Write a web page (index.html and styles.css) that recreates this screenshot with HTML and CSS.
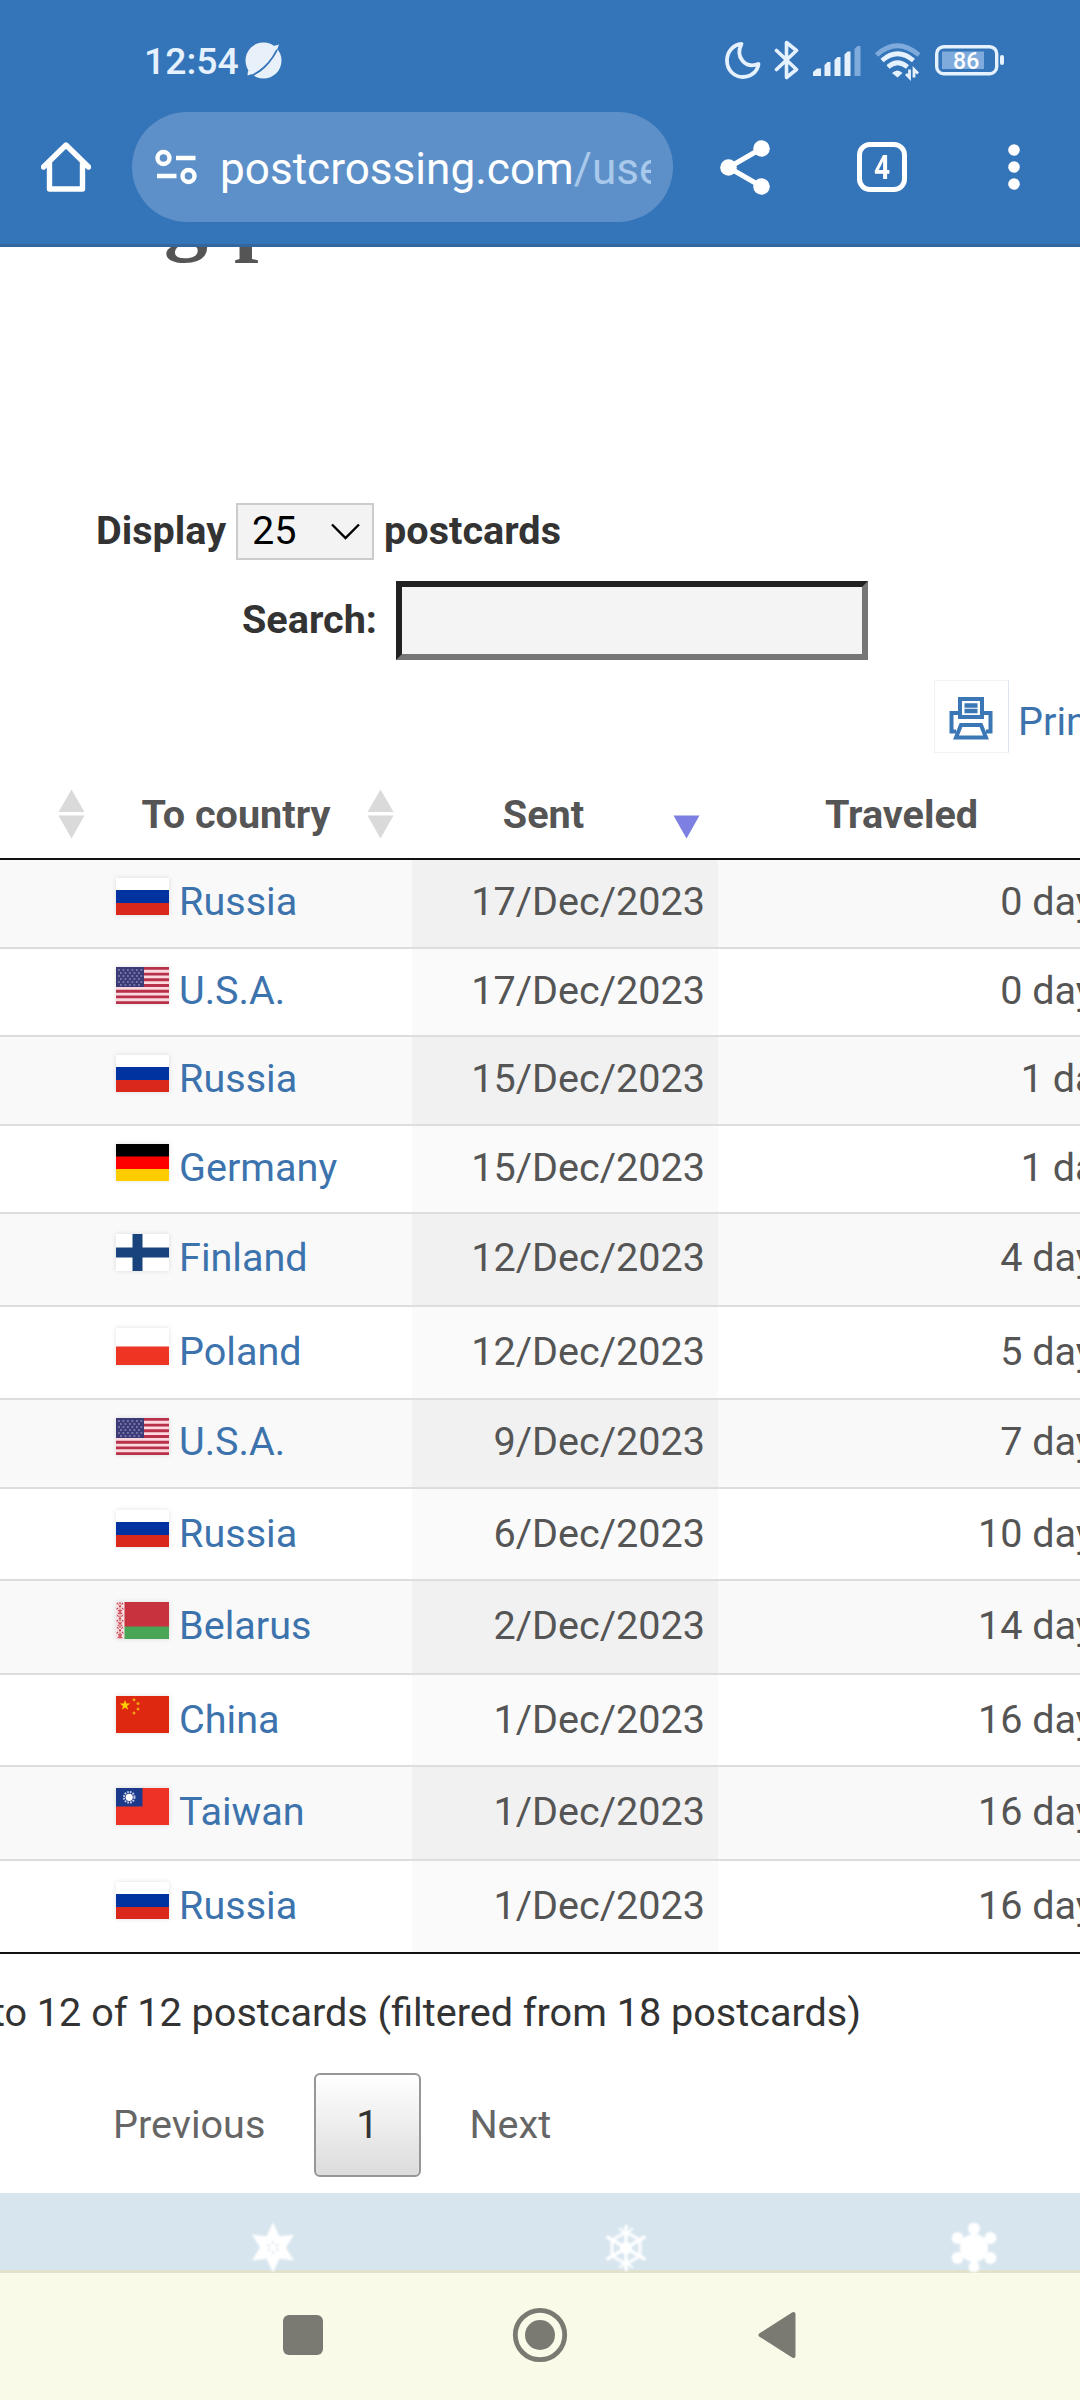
FILE: index.html
```html
<!doctype html>
<html lang="en">
  <head>
    <meta charset="UTF-8" />
    <meta name="viewport" content="width=device-width, initial-scale=1.0" />
    <title>Traveling postcards</title>
    <link rel="stylesheet" href="styles.css">
  </head>
  <body>
    <!-- flags and sort arrows, reused in the table -->
    <svg class="defs" width="0" height="0">
      <symbol id="flag-ru" viewBox="0 0 53 37" preserveAspectRatio="none">
        <rect width="53" height="37" fill="#fff" />
        <rect y="12" width="53" height="13" fill="#0033a0" />
        <rect y="25" width="53" height="12" fill="#da291c" />
      </symbol>
      <symbol id="flag-us" viewBox="0 0 53 37" preserveAspectRatio="none">
        <rect width="53" height="37" fill="#fbd9de" />
        <path d="M0 1.4h53M0 7.1h53M0 12.8h53M0 18.5h53M0 24.2h53M0 29.9h53M0 35.6h53" stroke="#b8304a" stroke-width="2.9" />
        <rect width="28" height="20" fill="#3c3b78" />
        <path d="M2 3h25M4 6h22M2 9h25M4 12h22M2 15h25M4 18h22" stroke="#8a8aba" stroke-width="1.5" stroke-dasharray="1.8 2.7" />
      </symbol>
      <symbol id="flag-de" viewBox="0 0 53 37" preserveAspectRatio="none">
        <rect width="53" height="37" fill="#000" />
        <rect y="12.5" width="53" height="13" fill="#f00" />
        <rect y="25" width="53" height="12" fill="#fc0" />
      </symbol>
      <symbol id="flag-fi" viewBox="0 0 53 37" preserveAspectRatio="none">
        <rect width="53" height="37" fill="#fff" />
        <path d="M0 18.5h53M21.5 0v37" stroke="#18437c" stroke-width="10" />
      </symbol>
      <symbol id="flag-pl" viewBox="0 0 53 37" preserveAspectRatio="none">
        <rect width="53" height="37" fill="#fff" />
        <rect y="18.5" width="53" height="18.5" fill="#ee3524" />
      </symbol>
      <symbol id="flag-by" viewBox="0 0 53 37" preserveAspectRatio="none">
        <rect width="53" height="37" fill="#c8313e" />
        <rect y="24.5" width="53" height="12.5" fill="#4aa657" />
        <rect width="8.5" height="37" fill="#f4dfe1" />
        <path d="M1 1l6 6-6 6 6 6-6 6 6 6-6 6M7 1L1 7l6 6-6 6 6 6-6 6 6 6M4 0v37" fill="none" stroke="#cb4350" stroke-width="1.1" stroke-dasharray="2.2 1.2" />
      </symbol>
      <symbol id="flag-cn" viewBox="0 0 53 37" preserveAspectRatio="none">
        <rect width="53" height="37" fill="#de2910" />
        <path d="M9 4l1.3 3.6h3.9L11 9.900l1.200 3.900L9 11.500l-3.200 2.300L7 9.900 3.800 7.600h3.900z" fill="#ffd000" />
        <g fill="#f0a010">
          <circle cx="18" cy="3.800" r="1.500" />
          <circle cx="22" cy="7.600" r="1.500" />
          <circle cx="22" cy="13" r="1.500" />
          <circle cx="18" cy="17" r="1.500" />
        </g>
      </symbol>
      <symbol id="flag-tw" viewBox="0 0 53 37" preserveAspectRatio="none">
        <rect width="53" height="37" fill="#ef3226" />
        <rect width="26.5" height="18.500" fill="#1b3a8c" />
        <circle cx="13.200" cy="9.300" r="5.300" fill="none" stroke="#c3cbe4" stroke-width="2" stroke-dasharray="1.700 1.080" />
        <circle cx="13.200" cy="9.300" r="3.600" fill="#fff" />
      </symbol>
      <symbol id="sort-both" viewBox="0 0 27 50">
        <path d="M13.500 0.500L26.500 23H0.500zM13.500 49.500L26.500 26.500H0.500z" fill="#dadada" />
      </symbol>
      <symbol id="sort-desc" viewBox="0 0 27 50">
        <path d="M13.500 49.500L26.500 26.500H0.500z" fill="#7d80e0" />
      </symbol>
    </svg>

    <header class="browser">
      <div class="status-bar">
        <span class="clock">12:54</span>
        <svg class="planet" width="37" height="37" viewBox="0 0 37 37">
          <circle cx="18.500" cy="18.500" r="18" fill="#e8f0fa" />
          <path d="M4 34.500Q12 32 19.500 25Q29 16 34 3" fill="none" stroke="#3474b9" stroke-width="1.800" />
          <path d="M3 28.500L2.500 33.500 9 31.500M27 4.500L34 2.500 32 8" fill="#e8f0fa" />
        </svg>
        <div class="status-icons">
          <svg width="36" height="44" viewBox="0 0 36 44">
            <path d="M16.500 6C8 6.500 2 14 2 22.500C2 32.500 9.500 39 18 39C26 39 32.500 33.500 33.500 26C20 31 10 19 16.500 6Z" fill="none" stroke="#e6f1fe" stroke-width="3.800" stroke-linejoin="round" />
          </svg>
          <svg width="26" height="44" viewBox="0 0 26 44">
            <path d="M2.500 12.500L22.500 31.500 12.500 39.500V4.500L22.500 12.500 2.500 31.500" fill="none" stroke="#e6f1fe" stroke-width="3.600" stroke-linejoin="round" stroke-linecap="round" />
          </svg>
          <svg width="48" height="44" viewBox="0 0 48 44">
            <path d="M0 38v-4l4-3.500h4V38zM11.500 38V27l3-3h3v14zM21.500 38V22l3-3h3v19zM31.500 38V16.500l3-3h3V38z" fill="#e6f1fe" />
            <path d="M41.500 38V11l3-3h3v30z" fill="#7fabdc" />
          </svg>
          <svg width="48" height="44" viewBox="0 0 48 44">
            <g fill="none" stroke-width="4.600">
              <path d="M2.500 17Q23 -1.500 45 17" stroke="#7fabdc" />
              <path d="M8 22.500Q23.500 9 39.500 22.500M14 29Q23.500 20.500 33.500 29" stroke="#e6f1fe" />
            </g>
            <path d="M18 35Q23.500 30 28.500 35L23.500 39.500z" fill="#e6f1fe" />
            <path d="M35.500 31.500v8L32 36M40 39.500v-8l4 4" fill="none" stroke="#e6f1fe" stroke-width="2.800" />
          </svg>
          <svg width="70" height="44" viewBox="0 0 70 44">
            <rect x="1.700" y="8.700" width="60" height="27" rx="7" fill="none" stroke="#e6f1fe" stroke-width="3.400" />
            <rect x="7" y="13.500" width="42" height="17.500" fill="#7fabdc" />
            <rect x="65" y="17" width="4" height="10" rx="2" fill="#e6f1fe" />
            <text x="31.200" y="30.600" class="battery-level">86</text>
          </svg>
        </div>
      </div>

      <div class="toolbar">
        <svg width="50" height="50" viewBox="0 0 50 50">
          <path d="M2.500 25L25 3l22.500 22M8.500 21v26h33V21" fill="none" stroke="#fff" stroke-width="5.400" stroke-linejoin="round" stroke-linecap="round" />
        </svg>
        <div class="address">
          <svg width="42" height="36" viewBox="0 0 42 36">
            <g fill="none" stroke="#fff" stroke-width="4.400">
              <circle cx="8.500" cy="9" r="6" />
              <circle cx="33.500" cy="27" r="6" />
              <path d="M21 9h19.500M2 27h19.500" />
            </g>
          </svg>
          <span class="url">postcrossing.com<span class="path">/user</span></span>
        </div>
        <svg class="share" width="50" height="55" viewBox="0 0 50 55">
          <path d="M41.500 8.500L8.500 27.500l33 19" fill="none" stroke="#fff" stroke-width="5" />
          <g fill="#fff">
            <circle cx="41.500" cy="8.500" r="8.300" />
            <circle cx="8.500" cy="27.500" r="8.300" />
            <circle cx="41.500" cy="46.500" r="8.300" />
          </g>
        </svg>
        <div class="tab-count"><span>4</span></div>
        <svg width="12" height="46" viewBox="0 0 12 46" fill="#fff">
          <circle cx="6" cy="6" r="5.800" />
          <circle cx="6" cy="23" r="5.800" />
          <circle cx="6" cy="40" r="5.800" />
        </svg>
      </div>
    </header>

    <main>
      <h1>Traveling postcards</h1>

      <div class="length-row">
        <span>Display</span>
        <div class="select">
          <span>25</span>
          <svg width="29" height="17" viewBox="0 0 29 17">
            <path d="M1 1.500L14.500 15 28 1.500" fill="none" stroke="#000" stroke-width="2.400" />
          </svg>
        </div>
        <span>postcards</span>
      </div>

      <div class="search-row">
        <label for="search">Search:</label>
        <input id="search" type="text" />
      </div>

      <div class="print-row">
        <span class="print-icon">
          <svg width="44" height="44" viewBox="0 0 44 44">
            <g fill="none" stroke="#3b76b5" stroke-width="4">
              <path d="M11 21V3h22v18z" />
              <path d="M11 17H2.500v18.500H7M33 17h8.500v18.500H37" />
              <path d="M12 29h20l5 12.500H7z" />
            </g>
            <path d="M15.500 9.500h13M15.500 15h13" stroke="#3b76b5" stroke-width="4.500" />
          </svg>
        </span>
        <a>Print</a>
      </div>

      <table>
        <colgroup>
          <col class="col-from">
          <col class="col-country">
          <col class="col-sent">
          <col class="col-traveled">
        </colgroup>
        <thead>
          <tr>
            <th><div class="head"><span></span><svg width="27" height="50"><use href="#sort-both" /></svg></div></th>
            <th><div class="head"><span>To country</span><svg width="27" height="50"><use href="#sort-both" /></svg></div></th>
            <th><div class="head"><span>Sent</span><svg width="27" height="50"><use href="#sort-desc" /></svg></div></th>
            <th><div class="head"><span>Traveled</span><svg width="27" height="50"></svg></div></th>
          </tr>
        </thead>
        <tbody>
          <tr class="short first">
            <td></td>
            <td><svg class="flag"><use href="#flag-ru" /></svg><a>Russia</a></td>
            <td class="num sorted">17/Dec/2023</td>
            <td class="num">0 days</td>
          </tr>
          <tr class="short">
            <td></td>
            <td><svg class="flag"><use href="#flag-us" /></svg><a>U.S.A.</a></td>
            <td class="num sorted">17/Dec/2023</td>
            <td class="num">0 days</td>
          </tr>
          <tr class="short first">
            <td></td>
            <td><svg class="flag"><use href="#flag-ru" /></svg><a>Russia</a></td>
            <td class="num sorted">15/Dec/2023</td>
            <td class="num">1 day</td>
          </tr>
          <tr class="short">
            <td></td>
            <td><svg class="flag"><use href="#flag-de" /></svg><a>Germany</a></td>
            <td class="num sorted">15/Dec/2023</td>
            <td class="num">1 day</td>
          </tr>
          <tr class="medium">
            <td></td>
            <td><svg class="flag"><use href="#flag-fi" /></svg><a>Finland</a></td>
            <td class="num sorted">12/Dec/2023</td>
            <td class="num">4 days</td>
          </tr>
          <tr>
            <td></td>
            <td><svg class="flag"><use href="#flag-pl" /></svg><a>Poland</a></td>
            <td class="num sorted">12/Dec/2023</td>
            <td class="num">5 days</td>
          </tr>
          <tr class="short first">
            <td></td>
            <td><svg class="flag"><use href="#flag-us" /></svg><a>U.S.A.</a></td>
            <td class="num sorted">9/Dec/2023</td>
            <td class="num">7 days</td>
          </tr>
          <tr class="tight">
            <td></td>
            <td><svg class="flag"><use href="#flag-ru" /></svg><a>Russia</a></td>
            <td class="num sorted">6/Dec/2023</td>
            <td class="num">10 days</td>
          </tr>
          <tr class="loose">
            <td></td>
            <td><svg class="flag"><use href="#flag-by" /></svg><a>Belarus</a></td>
            <td class="num sorted">2/Dec/2023</td>
            <td class="num">14 days</td>
          </tr>
          <tr class="tight">
            <td></td>
            <td><svg class="flag"><use href="#flag-cn" /></svg><a>China</a></td>
            <td class="num sorted">1/Dec/2023</td>
            <td class="num">16 days</td>
          </tr>
          <tr class="loose">
            <td></td>
            <td><svg class="flag"><use href="#flag-tw" /></svg><a>Taiwan</a></td>
            <td class="num sorted">1/Dec/2023</td>
            <td class="num">16 days</td>
          </tr>
          <tr class="last">
            <td></td>
            <td><svg class="flag"><use href="#flag-ru" /></svg><a>Russia</a></td>
            <td class="num sorted">1/Dec/2023</td>
            <td class="num">16 days</td>
          </tr>
        </tbody>
      </table>

      <div class="info"><span>Showing 1 to 12 of 12 postcards (filtered from 18 postcards)</span></div>

      <div class="pagination">
        <span>Previous</span>
        <span class="current">1</span>
        <span>Next</span>
      </div>
    </main>

    <footer class="snow">
      <svg width="46" height="50" viewBox="0 0 46 50">
        <path d="M23 2l6 13 13.500-1.500-7.500 12 7.500 12-13.500-1.500L23 49l-6-13L3.500 37.500l7.500-12-7.500-12L17 15z" fill="#fff" stroke="#fff" stroke-width="1.500" />
        <path d="M23 19v3M23 29v3M17.500 22.500l2.500 1.500M26 27l2.500 1.500M28.500 22.500L26 24M20 27l-2.500 1.500" stroke="#d7e5ee" stroke-width="1.500" />
      </svg>
      <svg width="46" height="50" viewBox="0 0 46 50">
        <g fill="none" stroke="#fff">
          <path d="M23 3v46M3.500 14.500l39 23M3.500 37.500l39-23" stroke-width="3.400" />
          <path d="M23 10l14 8v16L23 42 9 34V18z" stroke-width="3" />
          <path d="M16 6l7 6 7-6M16 46l7-6 7 6" stroke-width="2.200" />
        </g>
        <circle cx="23" cy="26" r="6" fill="#fff" />
      </svg>
      <svg width="46" height="50" viewBox="0 0 46 50" fill="#fff">
        <circle cx="23" cy="26" r="14" />
        <path d="M23 3v46M3.500 14.500l39 23M3.500 37.500l39-23" stroke="#fff" stroke-width="4" />
        <circle cx="23" cy="6.500" r="6" />
        <circle cx="23" cy="45" r="5.500" />
        <circle cx="6.500" cy="16" r="6" />
        <circle cx="39.500" cy="16" r="6" />
        <circle cx="6.500" cy="36" r="6" />
        <circle cx="39.500" cy="36" r="6" />
      </svg>
    </footer>

    <nav class="system-nav">
      <svg width="60" height="60" viewBox="0 0 60 60">
        <rect x="10" y="10" width="40" height="40" rx="6" fill="#7a7a72" />
      </svg>
      <svg width="60" height="60" viewBox="0 0 60 60">
        <circle cx="30" cy="30" r="24.700" fill="none" stroke="#7a7a72" stroke-width="4.800" />
        <circle cx="30" cy="30" r="15" fill="#7a7a72" />
      </svg>
      <svg width="60" height="60" viewBox="0 0 60 60">
        <path d="M13.500 30L46.500 9v42z" fill="#7a7a72" stroke="#7a7a72" stroke-width="4" stroke-linejoin="round" />
      </svg>
    </nav>
  </body>
</html>
```
FILE: styles.css
```css
* {
  box-sizing: border-box;
}
body {
  margin: 0;
  width: 1080px;
  height: 2400px;
  overflow: hidden;
  background: #fff;
  font-family: Roboto, sans-serif;
  font-size: 39.6px;
  line-height: 46px;
  color: #333;
}
svg {
  flex: none;
}
.defs {
  display: block;
}
a {
  color: #3d73ad;
}

/* browser chrome */
.browser {
  height: 247px;
  background: #3474b9;
  border-bottom: 3px solid #31669e;
}
.status-bar {
  display: flex;
  align-items: center;
  height: 112px;
  padding: 8px 75px 0 144px;
}
.clock {
  font-size: 37.3px;
  font-weight: 500;
  color: #e6f1fe;
  padding-top: 2px;
}
.planet {
  margin-left: 6px;
}
.status-icons {
  display: flex;
  gap: 13px;
  margin-left: auto;
}
.battery-level {
  font-size: 23px;
  font-weight: 500;
  fill: #fff;
  text-anchor: middle;
}
.toolbar {
  display: flex;
  align-items: center;
  height: 110px;
  padding-left: 41px;
}
.address {
  display: flex;
  align-items: center;
  width: 541px;
  height: 110px;
  margin-left: 41px;
  padding: 0 22px 0 23px;
  border-radius: 55px;
  background: #5d90c8;
}
.url {
  flex: 1;
  margin-left: 23px;
  padding-top: 4px;
  overflow: hidden;
  white-space: nowrap;
  font-size: 44.1px;
  line-height: 56px;
  color: #fff;
}
.path {
  color: #a9c9ec;
}
.share {
  margin-left: 47px;
}
.tab-count {
  width: 50px;
  height: 50px;
  margin: 0 101px 0 87px;
  border: 5.5px solid #fff;
  border-radius: 13px;
  color: #fff;
  font-size: 33px;
  font-weight: bold;
  line-height: 41px;
  text-align: center;
}
.tab-count span {
  display: block;
  transform: scaleX(0.85);
}

/* page content */
main {
  height: 1946px;
  overflow: hidden;
}
h1 {
  margin: -76px 0 244px;
  height: 88px;
  font-family: "Liberation Serif", serif;
  font-size: 88px;
  line-height: 88px;
  text-indent: -152px;
  word-spacing: 4px;
  white-space: nowrap;
  color: #555;
}
.length-row,
.search-row {
  display: flex;
  align-items: center;
  font-weight: bold;
}
.length-row {
  height: 57px;
  padding-left: 96px;
  gap: 10px;
}
.length-row > span,
.search-row label {
  padding-bottom: 2px;
}
.select {
  display: flex;
  align-items: center;
  justify-content: space-between;
  width: 138px;
  height: 57px;
  padding: 0 12px 0 14px;
  border: 2px solid #ccc;
  background: #f3f3f3;
  font-weight: normal;
  color: #000;
}
.select span {
  padding-bottom: 1px;
}
.search-row {
  margin-top: 21px;
  padding-left: 242px;
}
.search-row input {
  width: 472px;
  height: 79px;
  margin-left: 19px;
  border: 6px solid;
  border-color: #212121 #767676 #767676 #212121;
  background: #f4f4f4;
}
.print-row {
  display: flex;
  align-items: center;
  height: 73px;
  margin-top: 20px;
  padding-left: 934px;
  overflow: hidden;
}
.print-icon {
  display: flex;
  flex: none;
  align-items: center;
  justify-content: center;
  width: 75px;
  height: 73px;
  border: 1px solid #f2f2f2;
  border-right-color: #dce3ea;
}
.print-icon svg {
  margin: 3px 2px 0 0;
}
.print-row a {
  margin-left: 9px;
  padding-top: 10px;
}

table {
  width: 1128px;
  table-layout: fixed;
  border-spacing: 0;
  border-bottom: 2px solid #111;
  color: #555;
}
.col-from {
  width: 103px;
}
.col-country {
  width: 309px;
}
.col-sent {
  width: 306px;
}
.col-traveled {
  width: 410px;
}
th {
  height: 107px;
  padding: 0;
  vertical-align: top;
  border-bottom: 2px solid #111;
}
.head {
  display: flex;
  align-items: center;
  padding: 36px 18px 0 2px;
}
.head span {
  flex: 1;
  padding-top: 1px;
  text-align: center;
}
td {
  height: 93px;
  padding: 21px 13px 0;
  vertical-align: top;
  white-space: nowrap;
  border-bottom: 2px solid #ddd;
}
tbody tr:nth-child(odd) td {
  background: #f9f9f9;
}
tbody tr td.sorted {
  background: #fafafa;
}
tbody tr:nth-child(odd) td.sorted {
  background: #f1f1f1;
}
td.num {
  padding-top: 22px;
  text-align: right;
}
.flag {
  width: 53px;
  height: 37px;
  margin-right: 10px;
  box-shadow: 0 0 5px rgba(0, 0, 0, 0.12);
}

.short td {
  height: 88px;
  padding-top: 18px;
}
.short td.num {
  padding-top: 19px;
}
.first td {
  height: 89px;
}
.medium td {
  padding-top: 20px;
}
.medium td.num {
  padding-top: 21px;
}
.tight td {
  height: 92px;
}
.loose td {
  height: 94px;
}
.last td {
  height: 91px;
  border-bottom: none;
}

.info {
  display: flex;
  justify-content: flex-end;
  width: 861px;
  margin-top: 36px;
  white-space: nowrap;
}
.pagination {
  display: flex;
  align-items: center;
  gap: 48.5px;
  margin-top: 37px;
  padding-left: 113px;
  color: #666;
}
.current {
  width: 107px;
  height: 104px;
  border: 2px solid #979797;
  border-radius: 6px;
  background: linear-gradient(#fff, #dcdcdc);
  color: #333;
  line-height: 100px;
  text-align: center;
}

.snow {
  display: flex;
  height: 77px;
  padding: 29px 0 0 250px;
  background: #d7e5ee;
}
.snow svg {
  margin-right: 307px;
  filter: blur(1px);
}
.snow svg + svg {
  margin-right: 302px;
}

/* android buttons */
.system-nav {
  display: flex;
  gap: 177px;
  height: 130px;
  padding: 32px 0 0 273px;
  border-top: 3px solid #e1e1ce;
  background: #fafae8;
}
```
